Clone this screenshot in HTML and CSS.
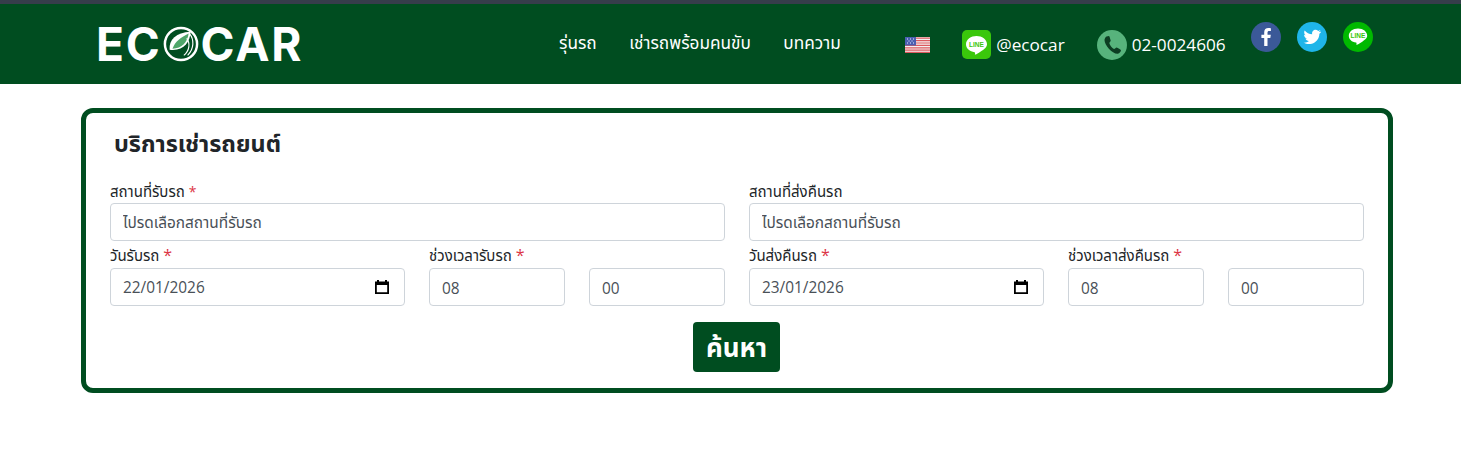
FILE: index.html
```html
<!DOCTYPE html>
<html lang="th">
<head>
<meta charset="utf-8">
<title>ECOCAR</title>
<link rel="stylesheet" href="styles.css">
</head>
<body>
<header class="topbar">
  <a class="logo" href="#">
    <span>EC</span>
    <svg class="logo-o" viewBox="0 0 38 38" width="36" height="36">
      <circle cx="19" cy="19" r="17" fill="none" stroke="#fff" stroke-width="2.6"/>
      <path d="M7 25C6 14 14 7 29 6C29 17 21 27 7 25Z" fill="#fff"/>
      <path d="M10 24C13 16 19 12 27 8C26 17 20 24 10 24Z" fill="#4fa66a"/>
      <path d="M28 8C33 14 33 24 26 31M25 13C29 18 28 26 22 31" fill="none" stroke="#fff" stroke-width="1.2"/>
    </svg>
    <span>CAR</span>
  </a>
  <nav class="nav">
    <a href="#">รุ่นรถ</a>
    <a href="#">เช่ารถพร้อมคนขับ</a>
    <a href="#">บทความ</a>
  </nav>
  <svg class="flag" viewBox="0 0 25 16" width="25" height="16">
    <rect width="25" height="16" fill="#f4f0f0"/>
    <path d="M0 1.2h25M0 3.6h25M0 6h25M0 8.4h25M0 10.8h25M0 13.2h25M0 15.4h25" stroke="#dc5a5f" stroke-width="1.2"/>
    <rect width="11" height="8.5" fill="#4a5fb0"/>
    <path d="M2 2h1M5 2h1M8 2h1M3.5 4h1M6.500 4h1M2 6h1M5 6h1M8 6h1" stroke="#e8ecff" stroke-width="1"/>
  </svg>
  <a class="contact contact-line" href="#">
    <svg class="icon-line" viewBox="0 0 29 29" width="29" height="29">
      <rect width="29" height="29" rx="5" fill="#3ac70b"/>
      <path d="M14.500 6C9 6 4 9.500 4 14.200C4 18.300 7.700 21.500 12.600 22.200C13.400 22.400 13 24 12.900 24.700C14 24.700 19.500 21.300 22.200 19C24 17.500 25 16 25 14.200C25 9.500 20 6 14.500 6Z" fill="#fff"/>
      <text class="line-mark" x="14.500" y="16.800" text-anchor="middle">LINE</text>
    </svg>
    <span>@ecocar</span>
  </a>
  <a class="contact contact-phone" href="#">
    <svg class="icon-phone" viewBox="0 0 30 30" width="30" height="30">
      <circle cx="15" cy="15" r="15" fill="#57b37c"/>
      <path d="M9.500 6.500L12 6C12.600 6 13 8.500 13.700 10.500C13.800 11.400 12.500 12.200 12.300 13C12.800 15.200 15 18 17 19C18 19 18.800 17.600 19.600 17.600C21 18 23.500 19.500 24 20.300C24 21.500 22.500 23.500 20.800 23.800C15 24 7.500 15 7.500 10C7.500 8.500 8.500 7 9.500 6.500Z" fill="#0c3d22"/>
    </svg>
    <span>02-0024606</span>
  </a>
  <div class="socials">
    <svg viewBox="0 0 30 30" width="30" height="30">
      <circle cx="15" cy="15" r="15" fill="#3b5998"/>
      <path d="M16.500 24V16h2.800l.5-3.300h-3.300v-2c0-1 .4-1.600 1.700-1.600h1.700V6.200c-.4-.1-1.400-.2-2.500-.2-2.600 0-4.200 1.500-4.200 4.300v2.400h-2.800V16h2.800v8z" fill="#fff"/>
    </svg>
    <svg viewBox="0 0 30 30" width="30" height="30">
      <circle cx="15" cy="15" r="15" fill="#1fb5e9"/>
      <path d="M24 9.400c-.7.300-1.400.500-2.100.6.800-.5 1.300-1.200 1.600-2-.7.400-1.500.7-2.300.9-1.500-1.600-4-1.500-5.300.1-.8.900-1 2.200-.7 3.300-3-.2-5.700-1.600-7.500-3.900-1 1.700-.5 3.800 1.100 4.900-.6 0-1.200-.2-1.700-.5 0 1.800 1.200 3.300 3 3.700-.5.100-1.100.2-1.700.1.500 1.500 1.900 2.500 3.500 2.500-1.500 1.200-3.400 1.700-5.300 1.500 5.500 3.300 12.400 1 14.900-4.600.6-1.400.9-2.800.9-4.200.7-.6 1.300-1.200 1.600-1.900z" fill="#fff"/>
    </svg>
    <svg viewBox="0 0 30 30" width="30" height="30">
      <circle cx="15" cy="15" r="15" fill="#00b900"/>
      <path d="M15 6.500C9.800 6.500 5.800 9.700 5.800 13.700C5.800 17.200 8.800 20 13 20.600C13.800 20.800 13.500 22.300 13.400 22.900C14.300 22.900 19 19.900 21.400 17.900C23.200 16.500 24.200 15.200 24.200 13.700C24.200 9.700 20.200 6.500 15 6.500Z" fill="#fff"/>
      <text class="line-mark" x="15" y="15.700" text-anchor="middle">LINE</text>
    </svg>
  </div>
</header>

<main class="card">
  <h2 class="card-title">บริการเช่ารถยนต์</h2>
  <form class="form">
    <div class="row">
      <div class="field">
        <label>สถานที่รับรถ <span class="req">*</span></label>
        <input class="control" type="text" value="ไปรดเลือกสถานที่รับรถ">
      </div>
      <div class="field">
        <label>สถานที่ส่งคืนรถ</label>
        <input class="control" type="text" value="ไปรดเลือกสถานที่รับรถ">
      </div>
    </div>
    <div class="row">
      <div class="subrow">
        <div class="field">
          <label class="label-tall">วันรับรถ <span class="req req-big">*</span></label>
          <div class="control date"><span>22/01/2026</span><svg viewBox="0 0 16 16" width="16" height="16"><path d="M3 1h2v1.500h6V1h2v1.500h2V15H1V2.500h2zM2.800 6v7.300h10.400V6z" fill="#000"/></svg></div>
        </div>
        <div class="times">
          <div class="field">
            <label class="label-tall">ช่วงเวลารับรถ <span class="req req-big">*</span></label>
            <input class="control" type="text" value="08">
          </div>
          <div class="field field-end">
            <input class="control" type="text" value="00">
          </div>
        </div>
      </div>
      <div class="subrow">
        <div class="field">
          <label class="label-tall">วันส่งคืนรถ <span class="req req-big">*</span></label>
          <div class="control date"><span>23/01/2026</span><svg viewBox="0 0 16 16" width="16" height="16"><path d="M3 1h2v1.500h6V1h2v1.500h2V15H1V2.500h2zM2.800 6v7.300h10.400V6z" fill="#000"/></svg></div>
        </div>
        <div class="times">
          <div class="field">
            <label class="label-tall">ช่วงเวลาส่งคืนรถ <span class="req req-big">*</span></label>
            <input class="control" type="text" value="08">
          </div>
          <div class="field field-end">
            <input class="control" type="text" value="00">
          </div>
        </div>
      </div>
    </div>
    <div class="actions">
      <button class="search" type="button">ค้นหา</button>
    </div>
  </form>
</main>
</body>
</html>
```

FILE: styles.css
```css
* { box-sizing: border-box; }
html, body { margin: 0; padding: 0; }
body {
  background: #fff;
  color: #212529;
  font-family: "Open Sans", "Noto Sans", "Noto Sans Thai", "Liberation Sans", sans-serif;
  font-size: 15px;
}
a { color: inherit; text-decoration: none; }

.topbar {
  display: flex;
  align-items: center;
  height: 84px;
  padding-left: 96px;
  background: #004d20;
  border-top: 4px solid #363d4b;
  color: #fff;
}
.logo {
  display: flex;
  align-items: center;
  width: 207px;
  height: 40px;
  font-family: "Inter", sans-serif;
  font-size: 46px;
  font-weight: 700;
  line-height: 40px;
  letter-spacing: 1.8px;
  margin-bottom: 1px;
}
.logo-o { flex: none; margin: 0 2px 0 1px; }
.nav {
  display: flex;
  gap: 32.500px;
  margin-left: 256px;
  font-size: 17.200px;
}
.flag { flex: none; margin-left: 64.500px; margin-top: 1px; }
.contact { display: flex; align-items: center; font-size: 17.200px; }
.contact-line { margin-left: 32px; gap: 5px; }
.contact-phone { margin-left: 32px; gap: 5px; }
.icon-phone { margin-top: 2px; }
.line-mark { font-family: "Liberation Sans", sans-serif; font-size: 6.500px; font-weight: 700; fill: #3ac70b; }
.socials { display: flex; gap: 16px; margin-left: 25px; margin-top: -14px; }

.card {
  width: 1312px;
  height: 285px;
  margin: 24px 0 0 81px;
  padding: 0 12px;
  background: #fff;
  border: 5px solid #004d20;
  border-radius: 12px;
}
.card-title {
  margin: 0;
  padding: 16px 0 0 16px;
  height: 59px;
  font-size: 23.400px;
  font-weight: 700;
  line-height: 28px;
}
.form { display: flex; flex-direction: column; }
.row { display: flex; gap: 24px; padding: 0 12px; }
.row > * { flex: 1 1 0; min-width: 0; }
.subrow { display: flex; gap: 24px; }
.subrow > .field { flex: 0 0 295px; }
.times { display: flex; flex: 1 1 0; gap: 24px; }
.times > .field { flex: 1 1 0; min-width: 0; }
.field { display: flex; flex-direction: column; }
.field-end { justify-content: flex-end; }
label { display: block; height: 21px; margin: 9px 0 1px; font-size: 15px; line-height: 21px; }
.label-tall { height: 17px; margin: 6px 0 4px; line-height: 17px; }
.req { color: #dc3545; font-size: 14px; }
.req-big { font-size: 16px; }
.control {
  display: block;
  width: 100%;
  height: 38px;
  padding: 7px 12px 5px;
  background: #fff;
  border: 1px solid #ced4da;
  border-radius: 4px;
  color: #495057;
  font-family: inherit;
  font-size: 15.400px;
}
input.control:focus { outline: 0; }
.date {
  display: flex;
  align-items: center;
  justify-content: space-between;
  padding: 6px 14px 6px 12px;
}
.actions { display: flex; justify-content: center; margin-top: 16px; padding-right: 1px; }
.search {
  width: 87px;
  height: 50px;
  padding: 4px 0 0;
  border: 0;
  border-radius: 4px;
  background: #004d20;
  color: #fff;
  font-family: inherit;
  font-size: 26px;
  font-weight: 700;
}
```
